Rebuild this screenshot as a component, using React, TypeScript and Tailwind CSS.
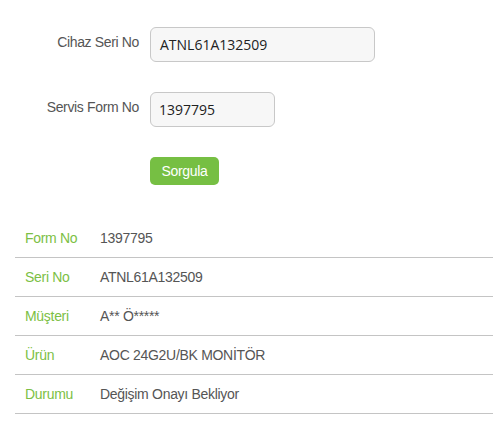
import React from "react";

const rows = [
  ["Form No", "1397795"],
  ["Seri No", "ATNL61A132509"],
  ["Müşteri", "A** Ö*****"],
  ["Ürün", "AOC 24G2U/BK MONİTÖR"],
  ["Durumu", "Değişim Onayı Bekliyor"],
];

export default function App() {
  return (
    <div className="w-[493px] h-[441px] bg-white" style={{ fontFamily: '"Liberation Sans", Arial, sans-serif' }}>
      <div className="pt-[27px] flex flex-col">
        <div className="flex items-center h-[35px]">
          <div className="w-[139px] text-right text-[14px] text-[#555] tracking-[-0.35px] -mt-[4px]">Cihaz Seri No</div>
          <div className="ml-[11px] w-[225px] h-[35px] rounded-[6px] border border-[#c8c8c8] bg-[#f7f7f7] flex items-center pl-[9px] text-[14px] text-[#222]" style={{ fontFamily: '"Open Sans", sans-serif' }}>ATNL61A132509</div>
        </div>
        <div className="flex items-center h-[35px] mt-[30px]">
          <div className="w-[139px] text-right text-[14px] text-[#555] tracking-[-0.35px] -mt-[4px]">Servis Form No</div>
          <div className="ml-[11px] w-[125px] h-[35px] rounded-[6px] border border-[#c8c8c8] bg-[#f7f7f7] flex items-center pl-[8px] text-[14px] text-[#222]" style={{ fontFamily: '"Open Sans", sans-serif' }}>1397795</div>
        </div>
        <div className="flex mt-[30px]">
          <button className="ml-[150px] w-[69px] h-[28px] rounded-[5px] bg-[#76bf43] text-white text-[14px] tracking-[-0.3px] flex items-center justify-center">Sorgula</button>
        </div>
      </div>
      <div className="mt-[34px] ml-[15px]">
        {rows.map(([k, v]) => (
          <div key={k} className="flex items-center h-[39px] border-b border-[#c4c4c4] text-[14px] tracking-[-0.3px]">
            <div className="w-[85px] pl-[10px] text-[#7cbf45]">{k}</div>
            <div className="text-[#555]">{v}</div>
          </div>
        ))}
      </div>
    </div>
  );
}
